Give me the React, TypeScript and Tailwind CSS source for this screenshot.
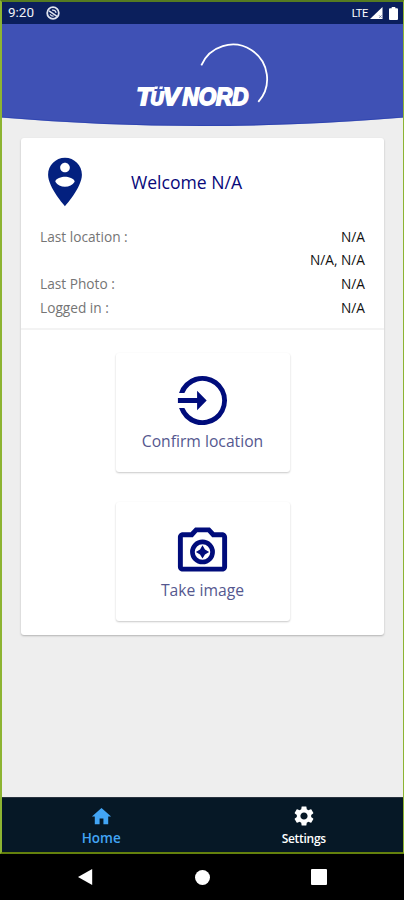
import type { ReactNode } from "react";

const details = [
  { label: "Last location :", value: "N/A" },
  { label: "", value: "N/A, N/A" },
  { label: "Last Photo :", value: "N/A" },
  { label: "Logged in :", value: "N/A" },
];

function StatusBar() {
  return (
    <div className="flex h-[22px] shrink-0 items-center bg-[#0b1f5c] pr-[5px] pl-[6px] font-[Roboto,sans-serif] text-white">
      <span className="w-[27px] text-[13.5px] leading-none text-[#f0f2f8]">
        9:20
      </span>
      <svg className="ml-[11px] size-[14px]" viewBox="0 0 14 14" fill="none">
        <circle cx="7" cy="7" r="5.8" stroke="#dfe3ee" strokeWidth="1.8" />
        <path
          d="M3 4.8 11 10.4"
          stroke="#dfe3ee"
          strokeWidth="1.6"
        />
        <path
          d="M6 4.200c2-.3 3.700.8 4.100 2.600M4 8.200c.9 1.500 2 2.100 3.600 2"
          stroke="#dfe3ee"
          strokeWidth="1.2"
        />
      </svg>
      <span className="ml-auto text-[11px] leading-none tracking-[-0.3px]">
        LTE
      </span>
      <svg className="ml-[2px] h-[12px] w-[13px]" viewBox="0 0 13 12">
        <path d="M12.5 0v12H0z" fill="#fff" />
        <path d="m9.200 8.400 2.400 2.400m0-2.400-2.400 2.400" stroke="#6d78a3" strokeWidth="0.9" />
      </svg>
      <svg className="ml-[6px] h-[13px] w-[9px]" viewBox="0 0 9 13">
        <path
          d="M2.7 0h3.6v1.3H8q1 0 1 1V12q0 1-1 1H1q-1 0-1-1V2.300q0-1 1-1h1.700z"
          fill="#fff"
        />
      </svg>
    </div>
  );
}

function Header() {
  return (
    <svg className="h-[103px] w-full shrink-0" viewBox="2 24 401 103">
      <path d="M2 24h401v93.500Q303 126 202 126T2 117.500z" fill="#3f51b5" />
      <path
        d="M2 117.200Q103 125.500 202 125.500T403 117.200"
        fill="none"
        stroke="#2139ad"
        strokeOpacity="0.600"
        strokeWidth="0.900"
      />
      <path
        d="M201.300 65.300A34.300 34.300 0 1 1 258.300 101.800"
        fill="none"
        stroke="#fff"
        strokeWidth="1.800"
      />
      <g
        fill="#fff"
        stroke="#fff"
        strokeWidth="1.800"
        fontFamily="'Liberation Sans', sans-serif"
        fontSize="24.500"
        fontWeight="700"
        fontStyle="italic"
      >
        <text x="136.500" y="104.500" textLength="15.500" lengthAdjust="spacingAndGlyphs">
          T
        </text>
        <text
          x="150.500"
          y="104.500"
          fontSize="17.500"
          strokeWidth="1.800"
          textLength="13"
          lengthAdjust="spacingAndGlyphs"
        >
          U
        </text>
        <text x="163" y="104.500" textLength="17" lengthAdjust="spacingAndGlyphs">
          V
        </text>
        <text x="182.500" y="104.500" textLength="66" lengthAdjust="spacingAndGlyphs">
          NORD
        </text>
      </g>
      <path d="M154.800 86.500h3.200l-.6 2.500h-3.200zM159.800 86.500h3.200l-.6 2.500h-3.200z" fill="#fff" />
    </svg>
  );
}

function ActionCard({ label, children }: { label: string; children: ReactNode }) {
  return (
    <button className="flex h-[119px] w-[174px] flex-col items-center rounded-[3px] bg-white pt-[18px] text-[#000c7b] shadow-[0_1px_2px_rgba(0,0,0,0.22)]">
      <svg className="size-[59px]" viewBox="0 0 24 24" fill="currentColor">
        {children}
      </svg>
      <span className="mt-[1px] text-[15.7px] leading-5 text-[#55588f]">{label}</span>
    </button>
  );
}

function WelcomeCard() {
  return (
    <main className="mx-auto mt-[11px] h-[497px] w-[363px] rounded-[3px] bg-white shadow-[0_1px_2px_rgba(0,0,0,0.25)]">
      <section className="h-[192px] border-b-2 border-[#f3f3f3] px-[19px] pt-[15px]">
        <div className="flex h-[58px] items-center">
          <svg className="-ml-[4px] size-[58px] text-[#03207f]" viewBox="0 0 24 24">
            <path
              d="M12 2C8.140 2 5 5.140 5 9c0 5.250 7 13 7 13s7-7.750 7-13c0-3.860-3.140-7-7-7zm0 2c1.100 0 2 .9 2 2s-.9 2-2 2-2-.9-2-2 .9-2 2-2zm0 10c-1.670 0-3.140-.850-4-2.150.020-1.320 2.670-2.050 4-2.050s3.980.730 4 2.050c-.860 1.300-2.330 2.150-4 2.150z"
              fill="currentColor"
            />
          </svg>
          <h1 className="ml-[37px] text-[17.6px] font-medium text-[#08087a]">
            Welcome N/A
          </h1>
        </div>
        <dl className="mt-[14px] text-[13.7px]">
          {details.map(({ label, value }, i) => (
            <div key={i} className="flex h-[23.7px] items-center justify-between">
              <dt className="text-[#757575]">{label}</dt>
              <dd className="text-[#111]">{value}</dd>
            </div>
          ))}
        </dl>
      </section>
      <section className="flex flex-col items-center gap-[30px] pt-[23px]">
        <ActionCard label="Confirm location">
          <path d="M2.460 8.900A10 10 0 1 1 2.460 15.100h2.170A8 8 0 1 0 4.630 8.900z" />
          <path d="M2 11h7.800V8l3.900 4-3.900 4v-3H2z" />
        </ActionCard>
        <ActionCard label="Take image">
          <g transform="translate(0 1)">
            <path d="M20 4h-3.170L15 2H9L7.170 4H4c-1.100 0-2 .9-2 2v12c0 1.100.9 2 2 2h16c1.100 0 2-.9 2-2V6c0-1.100-.9-2-2-2zm0 14H4V6h4.050l1.830-2h4.240l1.830 2H20v12z" />
            <circle cx="12" cy="12" r="4.100" fill="none" stroke="currentColor" strokeWidth="1.900" />
            <path d="m12 9.300 1 1.700 1.700 1-1.700 1-1 1.700-1-1.700-1.700-1 1.700-1z" />
          </g>
        </ActionCard>
      </section>
    </main>
  );
}

function TabBar() {
  return (
    <nav className="mt-auto flex h-[55px] shrink-0 border-t border-[#28333f] bg-[#061826]">
      <div className="flex flex-1 flex-col items-center pt-[7px] pr-[2px] text-[#42a5f5]">
        <svg className="size-[23px]" viewBox="0 0 24 24" fill="currentColor">
          <path d="M10 20v-6h4v6h5v-8h3L12 3 2 12h3v8z" />
        </svg>
        <span className="text-[13.500px] leading-5 font-semibold">Home</span>
      </div>
      <div className="flex flex-1 flex-col items-center pt-[6px] pl-[2px] text-white">
        <svg className="size-[24px]" viewBox="0 0 24 24" fill="currentColor">
          <path d="M19.140 12.940c.040-.3.060-.610.060-.940 0-.320-.020-.640-.070-.940l2.030-1.580c.180-.140.230-.410.120-.610l-1.920-3.320c-.120-.220-.370-.290-.590-.220l-2.390.960c-.5-.380-1.030-.7-1.620-.940l-.360-2.540c-.040-.240-.240-.410-.480-.410h-3.840c-.240 0-.430.170-.470.410l-.360 2.540c-.590.240-1.130.570-1.620.940l-2.390-.960c-.220-.080-.470 0-.590.220L2.740 8.870c-.120.210-.080.470.120.610l2.030 1.580c-.050.3-.090.630-.090.940s.020.640.070.940l-2.030 1.580c-.180.140-.230.410-.120.610l1.920 3.320c.120.220.370.290.590.220l2.390-.960c.5.380 1.030.7 1.620.940l.360 2.540c.050.240.240.410.480.410h3.840c.240 0 .440-.170.470-.410l.360-2.540c.590-.240 1.130-.560 1.620-.940l2.390.960c.220.080.470 0 .590-.220l1.920-3.320c.120-.220.070-.470-.120-.610l-2.010-1.580zM12 15.600c-1.980 0-3.600-1.620-3.600-3.600s1.620-3.600 3.600-3.600 3.600 1.620 3.600 3.600-1.620 3.600-3.600 3.600z" />
        </svg>
        <span className="mt-[1px] text-[12px] leading-5 font-semibold tracking-[-0.3px]">
          Settings
        </span>
      </div>
    </nav>
  );
}

function SystemNav() {
  return (
    <div className="flex h-[46px] shrink-0 items-center justify-center gap-[101px] bg-black">
      <svg className="h-4 w-4" viewBox="0 0 16 16" fill="#fff">
        <path d="M14.200 0v16L0 8z" />
      </svg>
      <div className="size-[15px] rounded-full bg-white" />
      <div className="size-4 rounded-[1px] bg-white" />
    </div>
  );
}

export default function App() {
  return (
    <div className="flex h-[900px] w-[404px] flex-col bg-black font-['Open_Sans',sans-serif]">
      <div className="flex h-[854px] flex-col border-2 border-r-[1px] border-[#8db432] border-t-[#557b21] border-b-[#64810d] bg-[#eee]">
        <StatusBar />
        <Header />
        <WelcomeCard />
        <TabBar />
      </div>
      <SystemNav />
    </div>
  );
}
